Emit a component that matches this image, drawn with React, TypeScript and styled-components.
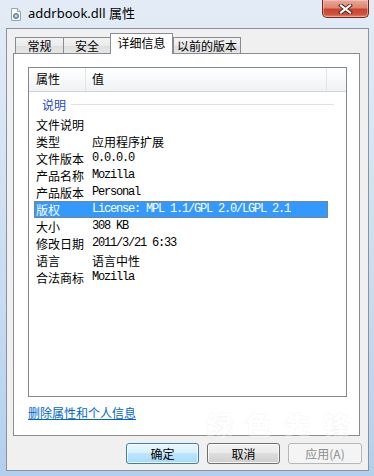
import styled, { createGlobalStyle } from 'styled-components';

const GlobalStyle = createGlobalStyle`
    html, body {
        margin: 0;
        padding: 0;
    }
    body {
        width: 374px;
        height: 476px;
        overflow: hidden;
        font-family: "Noto Sans CJK SC", "Noto Sans", sans-serif;
        color: #000;
    }
`;

const CJK = `"Noto Sans CJK SC", "Noto Sans", sans-serif`;
const MONO = `"Liberation Mono", "Noto Sans CJK SC", monospace`;

const Window = styled.div`
    position: relative;
    width: 374px;
    height: 476px;
    box-sizing: border-box;
    display: flex;
    flex-direction: column;
    padding: 0 5px 5px 6px;
    overflow: hidden;
    background: linear-gradient(180deg, #e3ecf6 0%, #d9e6f4 25%, #c4d9f1 70%, #b3cfee 100%);
`;

const TitleBar = styled.div`
    height: 28px;
    display: flex;
    align-items: flex-start;
`;

const TitleIcon = styled.svg`
    margin: 8px 0 0 4px;
    width: 12px;
    height: 13px;
`;

const TitleText = styled.div`
    margin: 5px 0 0 6px;
    font-family: "Noto Sans", ${CJK};
    font-size: 13px;
    line-height: 17px;
    color: #000;
`;

const CloseButton = styled.div`
    margin-left: auto;
    width: 47px;
    height: 18px;
    box-sizing: border-box;
    border: 1px solid #6b2a1f;
    border-top: none;
    border-radius: 0 0 5px 5px;
    background: linear-gradient(180deg, #e9a99b 0%, #dc8572 45%, #c8442f 55%, #d0553d 85%, #e48a6c 100%);
    box-shadow: inset 0 0 0 1px rgba(255, 220, 210, 0.45);
    display: flex;
    align-items: center;
    justify-content: center;
`;

const Body = styled.div`
    height: 443px;
    box-sizing: border-box;
    border: 1px solid #8a929c;
    background: #f0f0f0;
    display: flex;
    flex-direction: column;
    padding: 0 8px 6px 6px;
`;

const TabStrip = styled.div`
    margin-top: 4px;
    height: 20px;
    display: flex;
    align-items: flex-end;
    padding-left: 2px;
    position: relative;
    z-index: 1;
`;

const Tab = styled.div<{ $active?: boolean; $w: number }>`
    width: ${p => p.$w}px;
    box-sizing: border-box;
    height: ${p => (p.$active ? 21 : 16)}px;
    margin-bottom: ${p => (p.$active ? -1 : 0)}px;
    border: 1px solid #898c95;
    border-bottom: none;
    border-right: ${p => (p.$active ? '1px solid #898c95' : 'none')};
    background: ${p => (p.$active
        ? '#fff'
        : 'linear-gradient(180deg, #f3f3f3 0%, #ebebeb 50%, #dedede 51%, #e6e6e6 100%)')};
    font-family: ${CJK};
    font-size: 12px;
    line-height: ${p => (p.$active ? 18 : 15)}px;
    text-align: center;
    &:last-child {
        border-right: 1px solid #898c95;
    }
`;

const Panel = styled.div`
    height: 383px;
    box-sizing: border-box;
    border: 1px solid #898c95;
    background: #fff;
    padding: 13px 12px 0 14px;
    display: flex;
    flex-direction: column;
`;

const ListView = styled.div`
    height: 330px;
    box-sizing: border-box;
    border: 1px solid #828790;
    background: #fff;
    overflow: hidden;
`;

const Header = styled.div`
    height: 24px;
    box-sizing: border-box;
    display: flex;
    border-bottom: 1px solid #d5d5d5;
    background: linear-gradient(180deg, #ffffff 0%, #f7f8f9 55%, #f1f2f4 100%);
`;

const HeaderCell = styled.div<{ $w?: number }>`
    ${p => (p.$w ? `width: ${p.$w}px;` : 'flex: 1;')}
    box-sizing: border-box;
    padding-left: ${p => (p.$w === 57 ? 7 : 6)}px;
    border-right: 1px solid #e3e4e6;
    font-family: ${CJK};
    font-size: 12px;
    line-height: 22px;
    &:last-child {
        border-right: none;
    }
`;

const GroupRow = styled.div`
    height: 24px;
    display: flex;
    align-items: center;
    padding: 0 12px 0 13px;
    gap: 5px;
`;

const GroupLabel = styled.span`
    font-family: ${CJK};
    font-size: 12px;
    color: #2448c0;
`;

const GroupLine = styled.div`
    flex: 1;
    height: 1px;
    margin-top: 1px;
    background: #dedef6;
`;

const Row = styled.div<{ $selected?: boolean }>`
    width: 294px;
    height: 17px;
    box-sizing: border-box;
    margin-left: 5px;
    display: flex;
    align-items: center;
    background: ${p => (p.$selected ? '#3399ff' : 'transparent')};
    border: 1px ${p => (p.$selected ? 'dotted #b8742e' : 'solid transparent')};
    color: ${p => (p.$selected ? '#fff' : '#000')};
`;

const Label = styled.div`
    width: 56px;
    padding-left: 1px;
    font-family: ${CJK};
    font-size: 12px;
    line-height: 15px;
    white-space: nowrap;
`;

const Value = styled.div<{ $mono?: boolean }>`
    font-family: ${p => (p.$mono ? MONO : CJK)};
    font-size: 12px;
    letter-spacing: ${p => (p.$mono ? -1.2 : 0)}px;
    line-height: 15px;
    white-space: nowrap;
`;

const RemoveLink = styled.a`
    margin-top: 8px;
    align-self: flex-start;
    font-family: ${CJK};
    font-size: 12px;
    line-height: 16px;
    color: #0066cc;
    text-decoration: underline;
    cursor: pointer;
`;

const ButtonRow = styled.div`
    margin-top: 7px;
    margin-right: -2px;
    display: flex;
    justify-content: flex-end;
    gap: 8px;
`;

const Button = styled.button<{ $kind?: 'default' | 'disabled'; $w?: number }>`
    width: ${p => p.$w ?? 73}px;
    height: 21px;
    box-sizing: border-box;
    padding: 0;
    border-radius: 3px;
    font-family: ${CJK};
    font-size: 12px;
    line-height: 18px;
    border: 1px solid ${p => (p.$kind === 'default' ? '#3c7fb1' : p.$kind === 'disabled' ? '#b5b8bb' : '#707070')};
    color: ${p => (p.$kind === 'disabled' ? '#8d8d8d' : '#000')};
    background: ${p => (p.$kind === 'default'
        ? 'linear-gradient(180deg, #eaf6fd 0%, #d9f0fc 45%, #bee6fd 50%, #a7d9f5 100%)'
        : p.$kind === 'disabled'
            ? '#f4f4f4'
            : 'linear-gradient(180deg, #f2f2f2 0%, #ebebeb 45%, #dddddd 50%, #cfcfcf 100%)')};
    box-shadow: inset 0 0 0 1px ${p => (p.$kind === 'disabled' ? 'transparent' : 'rgba(255,255,255,0.75)')};
`;

const Watermark = styled.div`
    position: absolute;
    left: 206px;
    top: 411px;
    font-family: ${CJK};
    font-weight: 900;
    font-size: 27px;
    line-height: 28px;
    letter-spacing: 12px;
    color: rgba(255, 255, 255, 0.35);
    -webkit-text-stroke: 0.5px rgba(200, 200, 200, 0.22);
    pointer-events: none;
    white-space: nowrap;
`;

type Prop = { label: string; value?: string; mono?: boolean; selected?: boolean };

const props: Prop[] = [
    { label: '文件说明' },
    { label: '类型', value: '应用程序扩展' },
    { label: '文件版本', value: '0.0.0.0', mono: true },
    { label: '产品名称', value: 'Mozilla', mono: true },
    { label: '产品版本', value: 'Personal', mono: true },
    { label: '版权', value: 'License: MPL 1.1/GPL 2.0/LGPL 2.1', mono: true, selected: true },
    { label: '大小', value: '308 KB', mono: true },
    { label: '修改日期', value: '2011/3/21 6:33', mono: true },
    { label: '语言', value: '语言中性' },
    { label: '合法商标', value: 'Mozilla', mono: true },
];

const tabs = [
    { name: '常规', w: 48 },
    { name: '安全', w: 47 },
    { name: '详细信息', w: 63, active: true },
    { name: '以前的版本', w: 68 },
];

export default function App() {
    return <>
        <GlobalStyle />
        <Window>
            <TitleBar>
                <TitleIcon viewBox="0 0 12 13">
                    <path d="M1.5 0.5h6l3 3v9h-9z" fill="#fdfdfd" stroke="#9aa3ad" />
                    <path d="M7.5 0.5v3h3" fill="#e6e9ec" stroke="#9aa3ad" />
                    <circle cx="6" cy="8" r="2.6" fill="#7fa6c8" stroke="#51708e" strokeWidth="0.8" />
                    <circle cx="6" cy="8" r="0.9" fill="#e8f0f7" />
                </TitleIcon>
                <TitleText>addrbook.dll 属性</TitleText>
                <CloseButton>
                    <svg width="15" height="10" viewBox="0 0 15 10">
                        <path d="M3 1.5L12 8.5M12 1.5L3 8.5" stroke="#4a1e16" strokeWidth="4" strokeLinecap="square" />
                        <path d="M3 1.5L12 8.5M12 1.5L3 8.5" stroke="#fff" strokeWidth="2.2" strokeLinecap="square" />
                    </svg>
                </CloseButton>
            </TitleBar>
            <Body>
                <TabStrip>
                    {tabs.map(t => <Tab key={t.name} $w={t.w} $active={t.active}>{t.name}</Tab>)}
                </TabStrip>
                <Panel>
                    <ListView>
                        <Header>
                            <HeaderCell $w={57}>属性</HeaderCell>
                            <HeaderCell $w={241}>值</HeaderCell>
                            <HeaderCell />
                        </Header>
                        <GroupRow>
                            <GroupLabel>说明</GroupLabel>
                            <GroupLine />
                        </GroupRow>
                        {props.map(p => <Row key={p.label} $selected={p.selected}>
                            <Label>{p.label}</Label>
                            {p.value && <Value $mono={p.mono}>{p.value}</Value>}
                        </Row>)}
                    </ListView>
                    <RemoveLink>删除属性和个人信息</RemoveLink>
                </Panel>
                <ButtonRow>
                    <Button $kind="default">确定</Button>
                    <Button>取消</Button>
                    <Button $kind="disabled" $w={74}>应用(A)</Button>
                </ButtonRow>
            </Body>
            <Watermark>绿色先锋</Watermark>
        </Window>
    </>;
}
